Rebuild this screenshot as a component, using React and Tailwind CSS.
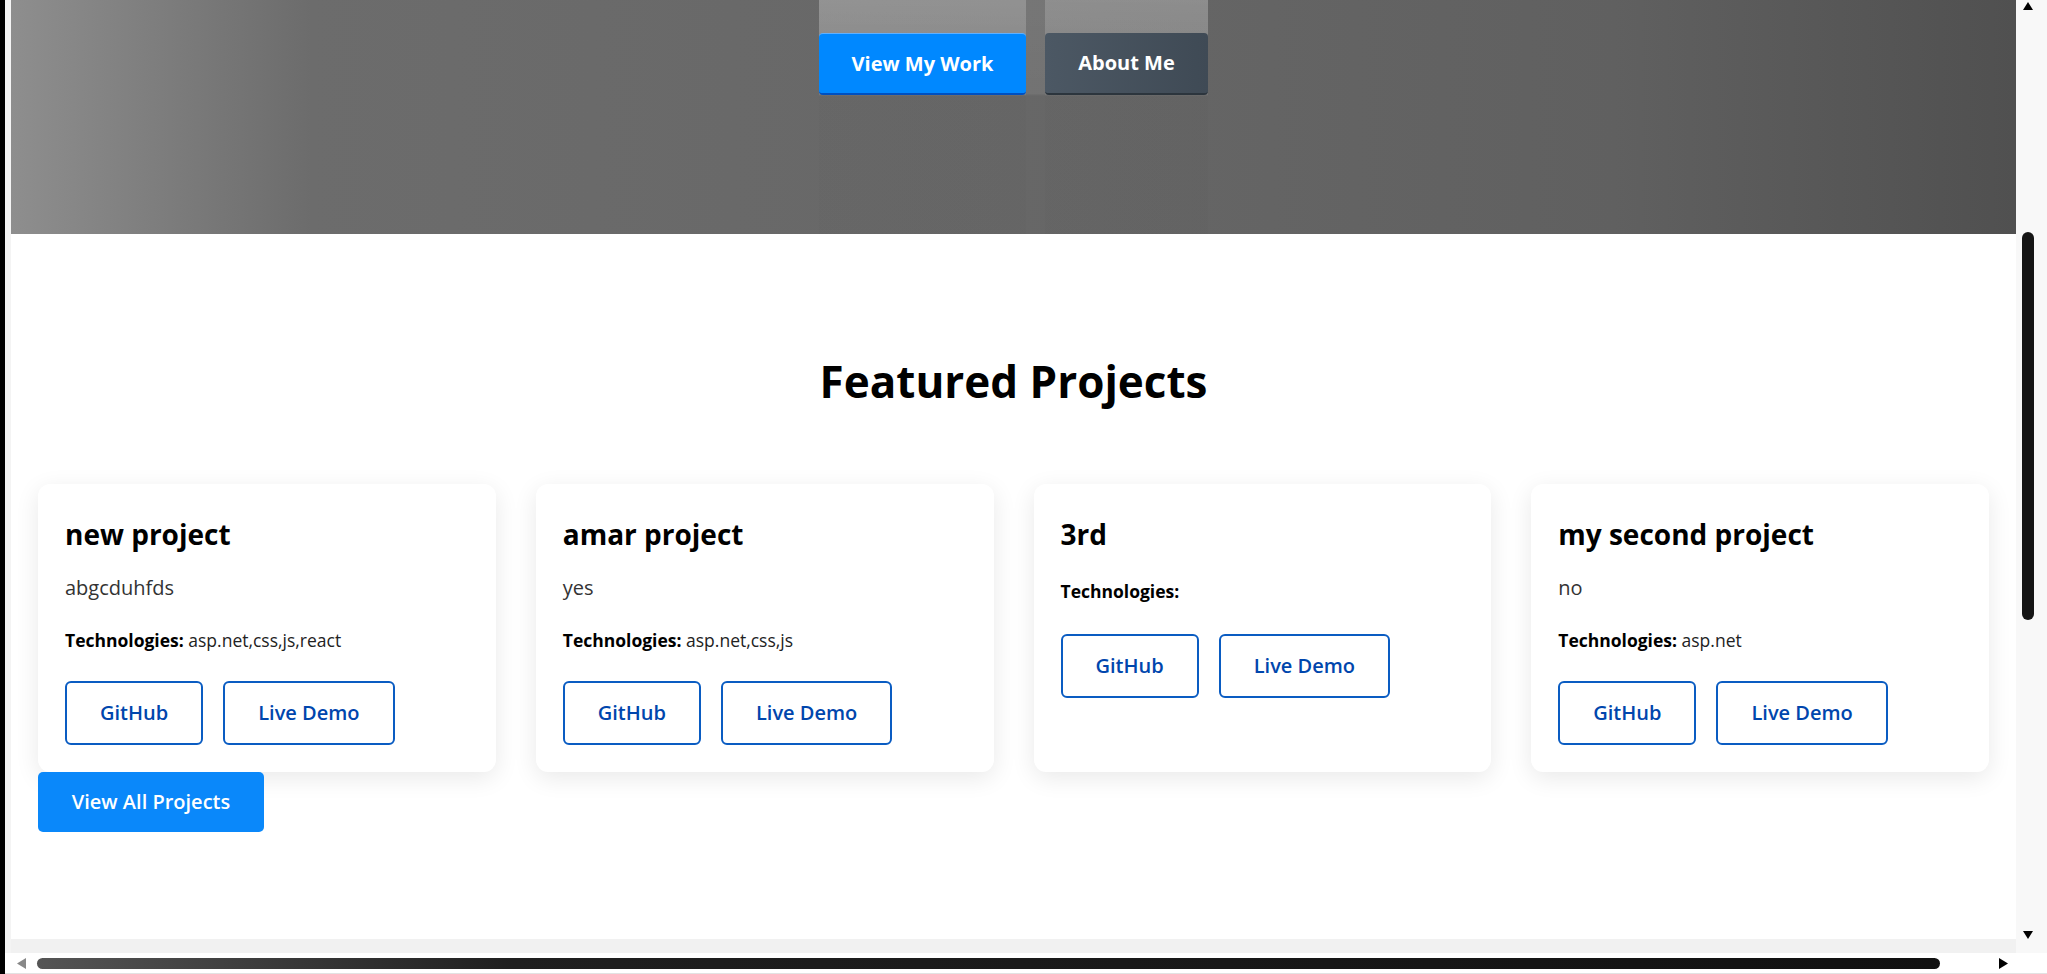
import React from 'react';

const projects = [
    { title: 'new project', desc: 'abgcduhfds', tech: 'asp.net,css,js,react' },
    { title: 'amar project', desc: 'yes', tech: 'asp.net,css,js' },
    { title: '3rd', desc: '', tech: '' },
    { title: 'my second project', desc: 'no', tech: 'asp.net' },
];

const ProjectCard = ({ p }) => (
    <div className="rounded-[12px] bg-white px-[27px] pt-[33px] pb-[27px] shadow-[0_6px_24px_rgba(0,0,0,0.09)]">
        <h3 className="mb-[23px] text-[28px] leading-[34px] font-bold text-black">{p.title}</h3>
        {p.desc && <p className="text-[20px] leading-[28px] text-[#333]">{p.desc}</p>}
        <p className={p.desc ? 'mt-[26px] text-[17.5px] leading-[24px] text-[#222]' : 'mt-[28px] text-[17.5px] leading-[24px] text-[#222]'}>
            <span className="font-bold text-black">Technologies:</span> {p.tech}
        </p>
        <div className={p.desc ? 'mt-[29px] flex gap-[20px]' : 'mt-[31px] flex gap-[20px]'}>
            <a className="flex h-[64px] items-center rounded-[6px] border-2 border-[#0a5cc2] px-[33px] text-[20px] font-semibold text-[#0046ad]">
                GitHub
            </a>
            <a className="flex h-[64px] items-center rounded-[6px] border-2 border-[#0a5cc2] px-[33px] text-[20px] font-semibold text-[#0046ad]">
                Live Demo
            </a>
        </div>
    </div>
);

const TriUp = () => (
    <svg width="10" height="8" viewBox="0 0 10 8"><polygon points="5,0 10,8 0,8" fill="#000" /></svg>
);
const TriDown = () => (
    <svg width="10" height="8" viewBox="0 0 10 8"><polygon points="0,0 10,0 5,8" fill="#000" /></svg>
);

export default function App() {
    return (
        <div className="flex h-[974px] w-[2047px] overflow-hidden bg-white font-['Open_Sans',sans-serif]">
            <div className="w-[5px] bg-black" />
            <div className="flex flex-1 flex-col">
                <div className="flex h-[953px]">
                    <div className="w-[6px] bg-[#f4f4f4]" />
                    {/* viewport */}
                    <div className="flex flex-1 flex-col overflow-hidden">
                        <section className="flex h-[234px] justify-center bg-[linear-gradient(to_right,#8e8e8e,#6c6c6c_15%,#676767_50%,#606060_80%,#505050)]">
                            <div className="flex gap-[19px] bg-[linear-gradient(to_bottom,rgba(255,255,255,0.1),rgba(255,255,255,0.08)_40%,transparent_41%)]">
                                <div className="bg-[linear-gradient(to_bottom,rgba(255,255,255,0.2),rgba(255,255,255,0.12)_40%,rgba(0,0,0,0.015)_41%)] pt-[33px]">
                                    <button className="h-[62px] w-[207px] rounded-[4px] border-t border-b-2 border-t-[#5fb0ff] border-b-[#0050c0] bg-[#0088ff] text-[20px] font-bold text-white">
                                        View My Work
                                    </button>
                                </div>
                                <div className="bg-[linear-gradient(to_bottom,rgba(255,255,255,0.18),rgba(255,255,255,0.1)_40%,rgba(0,0,0,0.015)_41%)] pt-[33px]">
                                    <button className="h-[62px] w-[163px] rounded-[4px] border-b-2 border-b-[#2c353d] bg-[linear-gradient(to_right,#4c5864,#3f4a55)] text-[20px] font-bold text-white">
                                        About Me
                                    </button>
                                </div>
                            </div>
                        </section>

                        <section className="px-[27px] pt-[120px] pb-[107px]">
                            <h2 className="text-center text-[44px] leading-[54px] font-bold text-black">Featured Projects</h2>
                            <div className="mt-[76px] grid grid-cols-4 gap-[40px]">
                                {projects.map((p) => (
                                    <ProjectCard key={p.title} p={p} />
                                ))}
                            </div>
                            <button className="h-[60px] w-[226px] rounded-[5px] bg-[#0a88fa] text-[20px] font-semibold text-white">
                                View All Projects
                            </button>
                        </section>
                        <div className="flex-1 bg-[#f1f1f1]" />
                    </div>
                    {/* vertical scrollbar */}
                    <div className="flex w-[31px] flex-col bg-[#f8f8f8] pr-[7px]">
                        <div className="flex h-[12px] items-start justify-center pt-[2px]">
                            <TriUp />
                        </div>
                        <div className="mt-[220px] mx-auto h-[388px] w-[12px] rounded-full bg-[#151515]" />
                        <div className="flex-1" />
                        <div className="flex h-[22px] items-start justify-center">
                            <TriDown />
                        </div>
                    </div>
                </div>
                {/* horizontal scrollbar */}
                <div className="flex h-[21px] items-center border-b border-[#e2e2e2] pl-[12px]">
                    <svg width="9" height="11" viewBox="0 0 9 11"><polygon points="9,0 9,11 0,5.5" fill="#888" /></svg>
                    <div className="ml-[11px] h-[11px] w-[1903px] rounded-full bg-[linear-gradient(to_right,#555,#1f1f1f_25%,#111)]" />
                    <div className="ml-[59px]">
                        <svg width="9" height="11" viewBox="0 0 9 11"><polygon points="0,0 9,5.5 0,11" fill="#000" /></svg>
                    </div>
                </div>
            </div>
        </div>
    );
}
